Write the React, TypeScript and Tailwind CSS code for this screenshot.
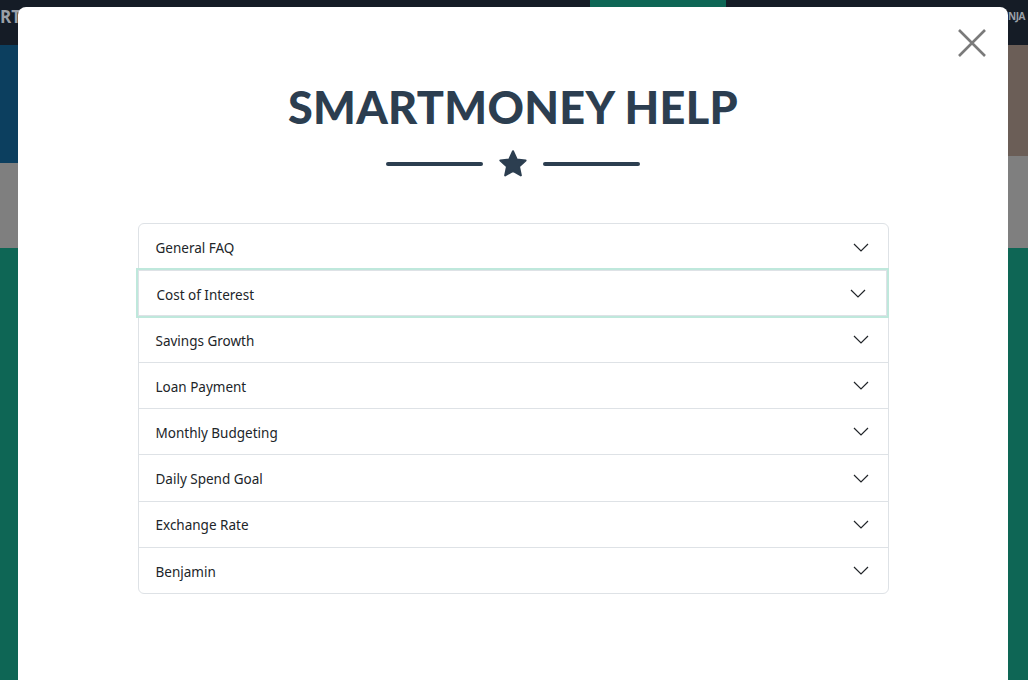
import React, { useState } from "react";

const topics = [
  "General FAQ",
  "Cost of Interest",
  "Savings Growth",
  "Loan Payment",
  "Monthly Budgeting",
  "Daily Spend Goal",
  "Exchange Rate",
  "Benjamin",
];

function Chevron() {
  return (
    <svg width="16" height="9" viewBox="0 0 16 9" fill="none">
      <path d="M1 1l7 7 7-7" stroke="#212529" strokeWidth="1.2" />
    </svg>
  );
}

export default function App() {
  const [focused, setFocused] = useState(1); // row with the focus ring

  return (
    <div className="relative w-[1028px] h-[680px] overflow-hidden bg-[#0e6655] font-['Open_Sans',sans-serif]">
      {/* page behind the modal */}
      <div className="flex flex-col">
        <div className="h-[45px] bg-[#151c26] flex items-start">
          <span className="w-[590px] text-[#9aa0a8] font-bold text-[17px] leading-none mt-[8px]">RT</span>
          <div className="w-[136px] h-[7px] bg-[#0e6655]" />
          <div className="flex-1 flex justify-end">
            <span className="w-[20px] text-[#9aa0a8] font-bold text-[10px] tracking-tighter leading-none mt-[11px] whitespace-nowrap">NJA</span>
          </div>
        </div>
        <div className="flex justify-between">
          <div className="w-[18px] flex flex-col">
            <div className="h-[118px] bg-[#0c3f5f]" />
            <div className="h-[85px] bg-[#7f7f7f]" />
          </div>
          <div className="w-[20px] flex flex-col">
            <div className="h-[111px] bg-[#6b5e57]" />
            <div className="h-[92px] bg-[#7f7f7f]" />
          </div>
        </div>
      </div>

      {/* modal */}
      <div className="absolute left-[18px] top-[7px] w-[990px] h-[700px] bg-white rounded-t-[8px]">
        <button className="absolute right-[17px] top-[17px] p-1">
          <svg width="30" height="30" viewBox="0 0 30 30">
            <path d="M2 2l26 26M28 2L2 28" stroke="#7a7a7a" strokeWidth="2.6" />
          </svg>
        </button>

        <div className="flex flex-col items-center pt-[78px]">
          <h1 className="text-[#2c3e50] font-['Lato',sans-serif] font-black text-[45px] leading-none tracking-[0.3px]">
            SMARTMONEY HELP
          </h1>
          <div className="flex items-center gap-[15px] mt-[19px]">
            <div className="w-[97px] h-[4px] rounded-full bg-[#2c3e50]" />
            <svg width="30" height="30" viewBox="0 0 24 24">
              <path
                d="M12 1.8l3 6.6 7.1.8-5.3 4.8 1.5 7.1L12 17.5l-6.3 3.6 1.5-7.1-5.3-4.8 7.1-.8z"
                fill="#2c3e50"
                stroke="#2c3e50"
                strokeWidth="1.6"
                strokeLinejoin="round"
              />
            </svg>
            <div className="w-[97px] h-[4px] rounded-full bg-[#2c3e50]" />
          </div>

          <div className="mt-[44px] w-[751px] border border-[#dee2e6] rounded-[6px]">
            {topics.map((t, i) => (
              <button
                key={t}
                onClick={() => setFocused(i)}
                className={`w-full h-[46.1px] flex items-center justify-between pl-[17px] pr-[19px] text-left text-[13.5px] text-[#212529] font-['Noto_Sans',sans-serif] ${
                  i > 0 ? "border-t border-[#dee2e6]" : ""
                } ${
                  focused === i
                    ? "relative z-10 outline outline-2 outline-[#bfe8dc] border border-[#9fd9c9] -mx-px w-[calc(100%+2px)] pl-[18px] pr-[20px]"
                    : ""
                } ${i === 0 ? "rounded-t-[6px]" : ""}`}
              >
                <span className="pt-[3px]">{t}</span>
                <Chevron />
              </button>
            ))}
          </div>
        </div>
      </div>
    </div>
  );
}
